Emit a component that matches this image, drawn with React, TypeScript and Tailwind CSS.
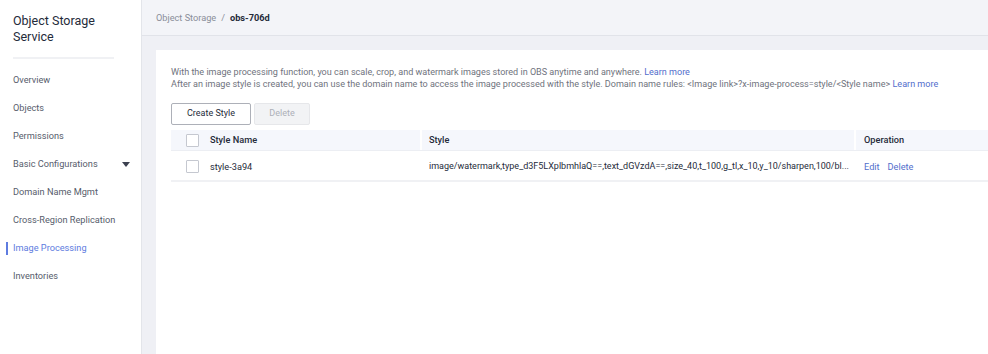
import React from 'react';

const font = { fontFamily: 'Roboto, "Liberation Sans", sans-serif' };

const menu = [
  'Overview',
  'Objects',
  'Permissions',
  'Basic Configurations',
  'Domain Name Mgmt',
  'Cross-Region Replication',
  'Image Processing',
  'Inventories',
];

const Checkbox = () => (
  <span className="inline-block w-[13px] h-[13px] border border-[#c5c8d0] rounded-[1px] bg-white" />
);

const Sidebar = () => (
  <div className="w-[142px] shrink-0 bg-white border-r border-[#e3e5ea] h-[354px]">
    <div className="pl-[13px] pt-[13px] pr-[27px]">
      <div className="text-[12.5px] leading-[16px] text-[#252b3a]">Object Storage Service</div>
      <div className="h-[2px] bg-[#f0f1f4] mt-[12px]" />
    </div>
    <div className="pt-[7px]">
      {menu.map((m) => {
        const active = m === 'Image Processing';
        return (
          <div key={m} className="relative h-[28px] flex items-center pl-[13px] pr-[10px]">
            {active && <span className="absolute left-[6px] top-[8px] w-[2px] h-[13px] bg-[#5e7ce0]" />}
            <span className={`text-[9.2px] ${active ? 'text-[#5e7ce0]' : 'text-[#575d6c]'}`}>{m}</span>
            {m === 'Basic Configurations' && (
              <span className="ml-auto mr-[1px] w-0 h-0 border-l-[4px] border-r-[4px] border-t-[5px] border-l-transparent border-r-transparent border-t-[#3c4150]" />
            )}
          </div>
        );
      })}
    </div>
  </div>
);

const App = () => {
  return (
    <div className="flex w-[988px] h-[354px] overflow-hidden bg-[#eff0f5]" style={font}>
      <Sidebar />
      <div className="flex-1 flex flex-col min-w-0">
        <div className="h-[36px] shrink-0 bg-[#f3f4f8] border-b border-[#e1e3e9] flex items-center pl-[14px] text-[9.2px]">
          <span className="text-[#8a8e99]">Object Storage</span>
          <span className="text-[#8a8e99] mx-[5px]">/</span>
          <span className="text-[#252b3a] font-bold">obs-706d</span>
        </div>
        <div className="flex-1 pl-[14px] pt-[14px]">
          <div className="bg-white h-full pl-[15px] pt-[16px]">
            <div className="text-[9.05px] leading-[12px] text-[#6f737d] whitespace-nowrap">
              <div>
                With the image processing function, you can scale, crop, and watermark images stored in OBS anytime and anywhere.{' '}
                <span className="text-[#526ecc]">Learn more</span>
              </div>
              <div>
                After an image style is created, you can use the domain name to access the image processed with the style. Domain name rules: &lt;Image link&gt;?x-image-process=style/&lt;Style name&gt;{' '}
                <span className="text-[#526ecc]">Learn more</span>
              </div>
            </div>
            <div className="flex gap-[3px] mt-[13px]">
              <button className="w-[80px] h-[22px] border border-[#adb0b8] rounded-[2px] bg-white text-[9px] text-[#252b3a]">
                Create Style
              </button>
              <button className="w-[56px] h-[22px] border border-[#e6e7ea] rounded-[2px] bg-[#f2f3f5] text-[9px] text-[#adb0b8]">
                Delete
              </button>
            </div>
            <div className="mt-[5px] text-[9.2px]">
              <div className="flex h-[21px] bg-[#f5f7fc] border-b border-[#eceef3] items-center text-[#252b3a] font-medium">
                <div className="w-[249px] shrink-0 flex items-center pl-[15px] gap-[11px] h-full">
                  <Checkbox />
                  <span>Style Name</span>
                </div>
                <div className="w-[436px] shrink-0 pl-[7px] border-l-2 border-r-2 border-white h-full flex items-center">Style</div>
                <div className="flex-1 pl-[8px]">Operation</div>
              </div>
              <div className="flex h-[31px] pt-[3px] border-b-2 border-[#f0f1f4] items-center text-[#252b3a]">
                <div className="w-[249px] shrink-0 flex items-center pl-[15px] gap-[11px]">
                  <Checkbox />
                  <span>style-3a94</span>
                </div>
                <div className="w-[436px] shrink-0 pl-[9px] pr-[6px] whitespace-nowrap overflow-hidden text-[9px]">
                  image/watermark,type_d3F5LXplbmhlaQ==,text_dGVzdA==,size_40,t_100,g_tl,x_10,y_10/sharpen,100/bl...
                </div>
                <div className="flex-1 pl-[8px] flex gap-[8px] text-[#526ecc]">
                  <span>Edit</span>
                  <span>Delete</span>
                </div>
              </div>
            </div>
          </div>
        </div>
      </div>
    </div>
  );
};

export default App;
